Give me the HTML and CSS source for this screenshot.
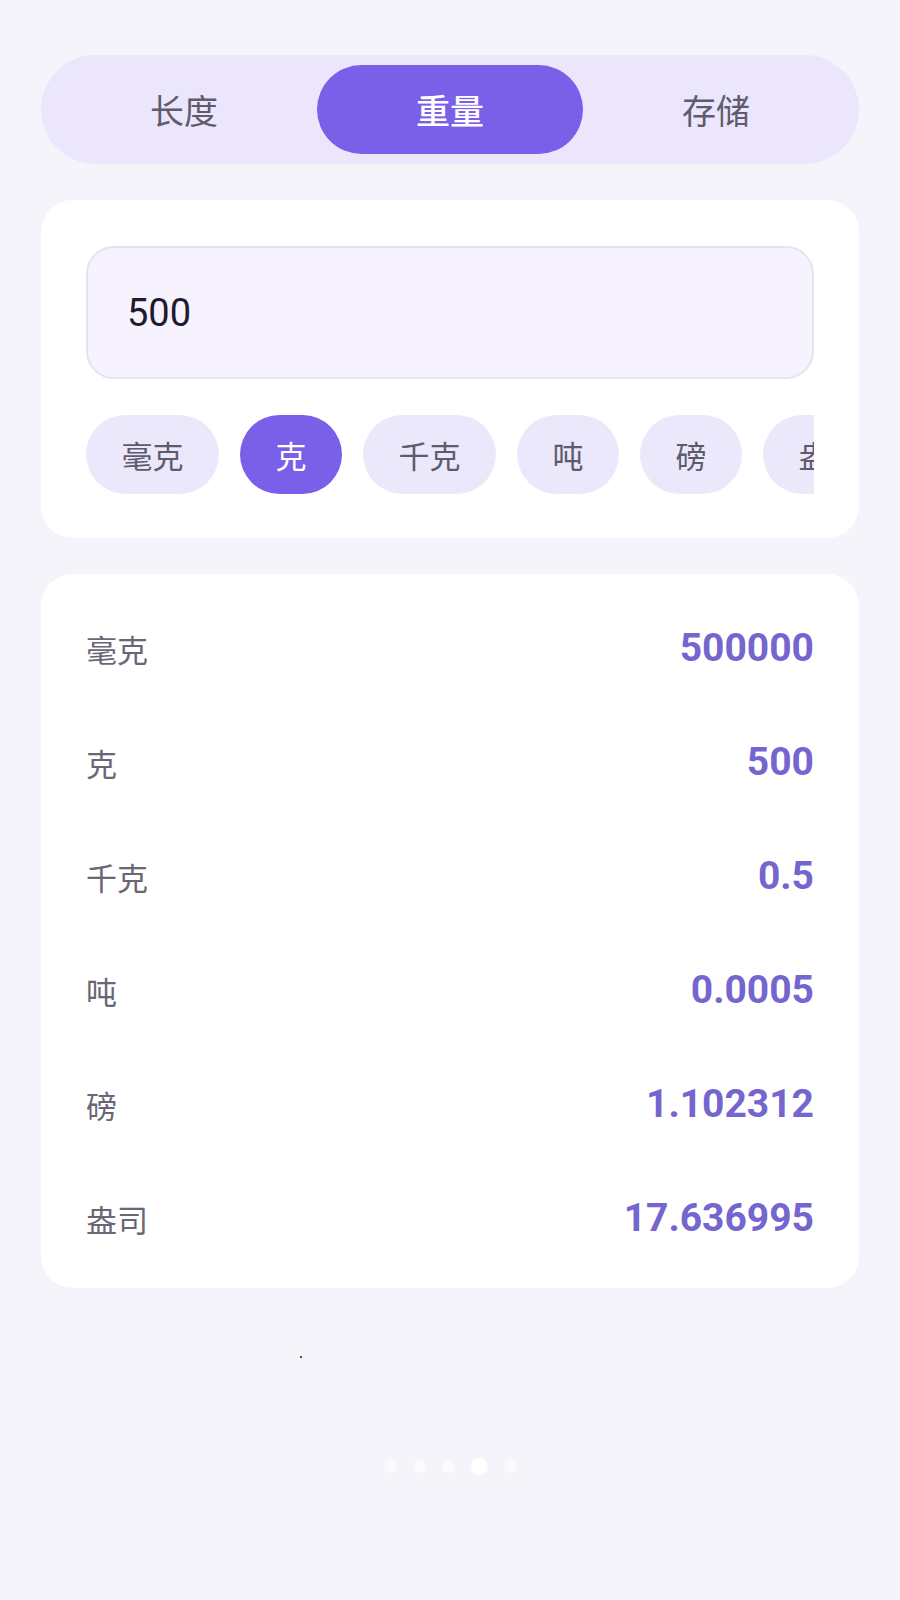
FILE: index.html
```html
<!DOCTYPE html>
<html lang="zh">
<head>
<meta charset="utf-8">
<title>单位换算</title>
<link rel="stylesheet" href="styles.css">
</head>
<body>
<div class="page">
  <div class="tabs">
    <div class="tab">长度</div>
    <div class="tab active">重量</div>
    <div class="tab">存储</div>
  </div>

  <div class="card input-card">
    <div class="input">500</div>
    <div class="chips">
      <span class="chip">毫克</span>
      <span class="chip active">克</span>
      <span class="chip">千克</span>
      <span class="chip">吨</span>
      <span class="chip">磅</span>
      <span class="chip">盎司</span>
    </div>
  </div>

  <div class="card results">
    <div class="row"><span class="label">毫克</span><span class="value">500000</span></div>
    <div class="row"><span class="label">克</span><span class="value">500</span></div>
    <div class="row"><span class="label">千克</span><span class="value">0.5</span></div>
    <div class="row"><span class="label">吨</span><span class="value">0.0005</span></div>
    <div class="row"><span class="label">磅</span><span class="value">1.102312</span></div>
    <div class="row"><span class="label">盎司</span><span class="value">17.636995</span></div>
  </div>

  <div class="speck"></div>

  <div class="dots">
    <span class="dot"></span>
    <span class="dot"></span>
    <span class="dot"></span>
    <span class="dot active"></span>
    <span class="dot"></span>
  </div>
</div>
</body>
</html>
```
FILE: styles.css
```css
html, body {
  margin: 0;
  padding: 0;
  background: #f5f4fb;
}

body {
  font-family: Roboto, "Noto Sans CJK SC", sans-serif;
  width: 900px;
  min-height: 1600px;
}

.page {
  padding: 55px 41px 0;
  display: flex;
  flex-direction: column;
}

.tabs {
  height: 109px;
  box-sizing: border-box;
  padding: 10px;
  border-radius: 55px;
  background: #ebe6fb;
  display: grid;
  grid-template-columns: 1fr 1fr 1fr;
}

.tab {
  display: flex;
  align-items: center;
  justify-content: center;
  font-size: 34px;
  color: #5f5b6e;
  border-radius: 45px;
}

.tab.active {
  background: #7a5fe9;
  color: #ffffff;
  font-weight: 500;
}

.card {
  background: #ffffff;
  border-radius: 32px;
  margin-top: 36px;
}

.input-card {
  padding: 46px 45px 44px;
}

.input {
  height: 133px;
  box-sizing: border-box;
  border: 2px solid #e6e2f3;
  border-radius: 28px;
  background: #f6f3fe;
  padding-left: 39px;
  display: flex;
  align-items: center;
  font-size: 38px;
  color: #1f1b2d;
}

.chips {
  margin-top: 36px;
  display: flex;
  gap: 21px;
  overflow: hidden;
}

.chip {
  flex: none;
  height: 79px;
  padding: 0 35.5px;
  border-radius: 40px;
  background: #ece8fb;
  color: #5f5b6e;
  font-size: 31px;
  display: flex;
  align-items: center;
}

.chip.active {
  background: #7a5fe9;
  color: #ffffff;
}

.results {
  padding: 17px 45px 13px;
}

.row {
  height: 114px;
  display: flex;
  align-items: center;
  justify-content: space-between;
}

.label {
  font-size: 31px;
  color: #6a6676;
}

.value {
  font-size: 39px;
  font-weight: 700;
  color: #7465cf;
}

.speck {
  width: 2px;
  height: 2px;
  background: #555;
  margin: 68px 0 0 259px;
}

.dots {
  margin-top: 100px;
  display: flex;
  justify-content: center;
  align-items: center;
  gap: 16px;
}

.dot {
  width: 13px;
  height: 13px;
  border-radius: 50%;
  background: #fbfbfe;
}

.dot.active {
  width: 17px;
  height: 17px;
  background: #ffffff;
}
```
